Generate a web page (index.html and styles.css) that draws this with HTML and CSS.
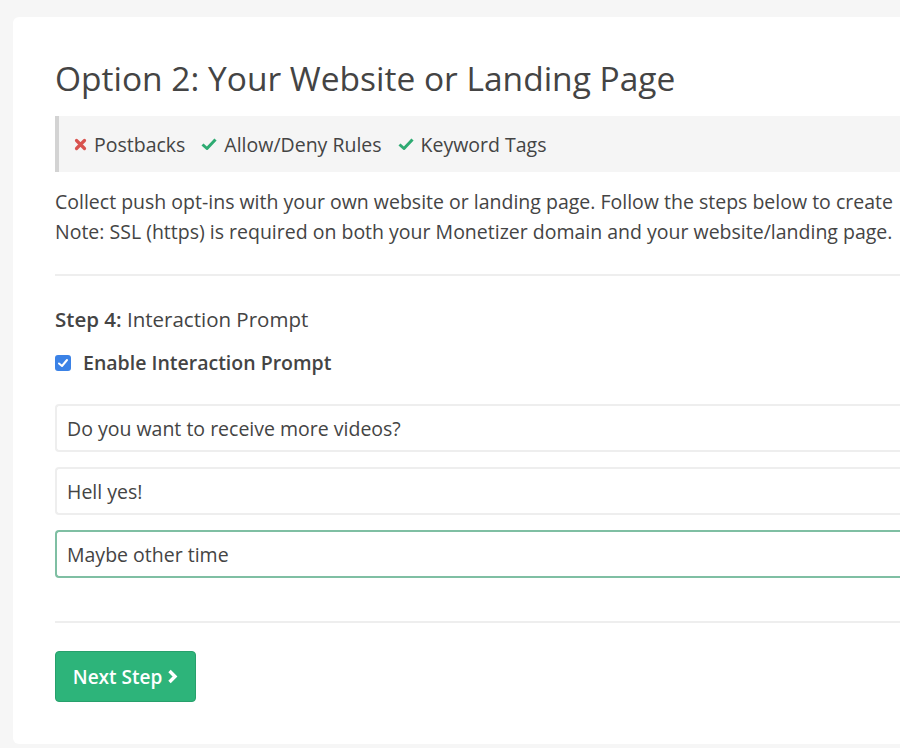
FILE: index.html
```html
<!DOCTYPE html>
<html>
<head>
<meta charset="utf-8">
<link rel="stylesheet" href="styles.css">
</head>
<body>
<div class="card">
  <h1 class="title">Option 2: Your Website or Landing Page</h1>
  <div class="features">
    <span class="feat"><svg class="ico" viewBox="0 0 13 13" width="13" height="13"><path d="M2.5 2.5 L10.5 10.5 M10.5 2.5 L2.5 10.5" stroke="#d9534f" stroke-width="3.2" stroke-linecap="round" fill="none"/></svg>Postbacks</span>
    <span class="feat"><svg class="ico" viewBox="0 0 16 12" width="16" height="12"><path d="M1.5 6.5 L6 10.5 L14.5 1.5" stroke="#2eab72" stroke-width="3" stroke-linejoin="round" fill="none"/></svg>Allow/Deny Rules</span>
    <span class="feat"><svg class="ico" viewBox="0 0 16 12" width="16" height="12"><path d="M1.5 6.5 L6 10.5 L14.5 1.5" stroke="#2eab72" stroke-width="3" stroke-linejoin="round" fill="none"/></svg>Keyword Tags</span>
  </div>
  <p class="desc">Collect push opt-ins with your own website or landing page. Follow the steps below to create<br>Note: SSL (https) is required on both your Monetizer domain and your website/landing page.</p>
  <hr class="divider">
  <div class="step"><b>Step 4:</b> Interaction Prompt</div>
  <label class="check"><span class="box"><svg viewBox="0 0 16 16" width="16" height="16"><path d="M4 8.5 L7 11 L12 5" stroke="#fff" stroke-width="2" fill="none" stroke-linecap="round" stroke-linejoin="round"/></svg></span>Enable Interaction Prompt</label>
  <div class="fields">
    <div class="field">Do you want to receive more videos?</div>
    <div class="field">Hell yes!</div>
    <div class="field focus">Maybe other time</div>
  </div>
  <hr class="divider bottom">
  <button class="btn">Next Step <svg viewBox="0 0 11 15" width="11" height="15"><path d="M2.5 2 L8 7.5 L2.5 13" stroke="#fff" stroke-width="3.4" fill="none" stroke-linejoin="miter"/></svg></button>
</div>
</body>
</html>
```
FILE: styles.css
```css
html, body {
  margin: 0;
  padding: 0;
  background: #f6f6f6;
  font-family: "Open Sans", "Noto Sans", sans-serif;
  color: #444;
}
body {
  padding: 17px 0 0 13px;
  height: 748px;
  box-sizing: border-box;
  overflow: hidden;
}
.card {
  background: #fff;
  border-radius: 6px 0 0 6px;
  height: 727px;
  padding: 0 0 0 42px;
  box-sizing: border-box;
  overflow: hidden;
  white-space: nowrap;
}
.title {
  margin: 0;
  padding-top: 39px;
  font-size: 33.5px;
  font-weight: 400;
  line-height: 44px;
  color: #444;
}
.features {
  margin-top: 16px;
  height: 56px;
  background: #f5f5f5;
  border-left: 4px solid #d3d3d3;
  display: flex;
  align-items: center;
  padding-left: 15px;
  gap: 16px;
  font-size: 19.5px;
}
.feat {
  display: inline-flex;
  align-items: center;
  gap: 7px;
}
.ico { display: block; }
.desc {
  margin: 15px 0 0;
  font-size: 19.5px;
  line-height: 30px;
  color: #444;
}
.divider {
  border: 0;
  border-top: 2px solid #eee;
  margin: 27px 0 0;
}
.step {
  margin-top: 30px;
  font-size: 20.5px;
  line-height: 26px;
}
.step b { font-weight: 600; }
.check {
  display: flex;
  align-items: center;
  margin-top: 18px;
  font-size: 19.5px;
  font-weight: 600;
  line-height: 26px;
}
.box {
  width: 16px;
  height: 16px;
  border-radius: 3px;
  background: #3b82e6;
  margin-right: 12px;
  display: inline-flex;
}
.box svg { display: block; }
.fields {
  margin-top: 28px;
  display: flex;
  flex-direction: column;
  gap: 15px;
}
.field {
  height: 48px;
  box-sizing: border-box;
  border: 2px solid #eee;
  border-right: 0;
  border-radius: 4px 0 0 4px;
  padding: 0 10px;
  display: flex;
  align-items: center;
  font-size: 19.5px;
  color: #444;
}
.field.focus {
  border-color: #7fbfa3;
}
.divider.bottom {
  margin-top: 43px;
}
.btn {
  margin-top: 28px;
  height: 51px;
  width: 141px;
  background: #2db47a;
  border: 1px solid #27a06c;
  border-radius: 4px;
  color: #fff;
  font-family: "Open Sans", "Noto Sans", sans-serif;
  font-size: 19px;
  font-weight: 600;
  display: flex;
  align-items: center;
  justify-content: center;
  gap: 5px;
  padding: 0;
}
.btn svg { display: block; }
```
